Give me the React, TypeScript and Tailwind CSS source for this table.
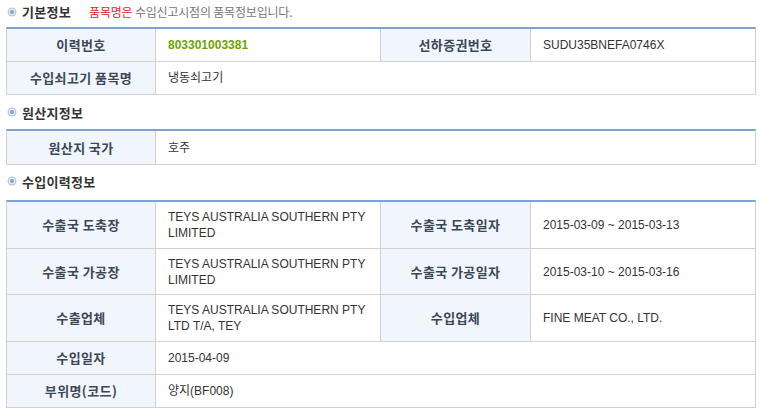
const KR = "font-['Liberation_Sans','Noto_Sans_CJK_KR',sans-serif]";

const Bullet = () => (
  <svg width="10" height="10" viewBox="0 0 10 10" className="mr-[5px] shrink-0">
    <circle cx="5" cy="5" r="4.5" fill="#b9c6d3" />
    <circle cx="5" cy="5" r="3.2" fill="#eef3f9" />
    <circle cx="5" cy="5" r="2.2" fill="#86acd9" />
  </svg>
);

interface SectionTitleProps {
  title: string;
  className?: string;
  children?: React.ReactNode;
}

const SectionTitle = ({ title, className, children }: SectionTitleProps) => (
  <div className={`flex items-center pl-[7px] ${className ?? ""}`}>
    <Bullet />
    <span className="text-[13px] font-bold text-[#333] font-['Noto_Sans_CJK_KR',sans-serif] tracking-[0.3px] leading-none">{title}</span>
    {children}
  </div>
);

const Label = ({ children, w }: { children: React.ReactNode; w: string }) => (
  <div
    className={`${w} shrink-0 flex items-center justify-center bg-[#f1f6fd] border-r border-[#d0d0d0] text-[13px] font-bold text-[#3b4858] font-['Noto_Sans_CJK_KR',sans-serif] tracking-[0.4px]`}
  >
    {children}
  </div>
);

const Value = ({ children, w, last }: { children: React.ReactNode; w: string; last?: boolean }) => (
  <div
    className={`${w} flex items-center pl-[12px] pr-[8px] text-[12px] leading-[16px] text-[#333] ${KR} ${last ? "" : "border-r border-[#d0d0d0]"}`}
  >
    <div>{children}</div>
  </div>
);

interface Cell {
  label: string;
  value: React.ReactNode;
}

const Row = ({ cells, h }: { cells: Cell[]; h: string }) => (
  <div className={`flex ${h} border-b border-[#d0d0d0]`}>
    {cells.length === 2 ? (
      <>
        <Label w="w-[149px]">{cells[0].label}</Label>
        <Value w="w-[225px]">{cells[0].value}</Value>
        <Label w="w-[150px]">{cells[1].label}</Label>
        <Value w="flex-1" last>{cells[1].value}</Value>
      </>
    ) : (
      <>
        <Label w="w-[149px]">{cells[0].label}</Label>
        <Value w="flex-1" last>{cells[0].value}</Value>
      </>
    )}
  </div>
);

const Table = ({ children }: { children: React.ReactNode }) => (
  <div className="ml-[6px] w-[750px] border-x border-[#d0d0d0] border-t-2 border-t-[#7ba3d6]">{children}</div>
);

export default function App() {
  return (
    <div className="w-[760px] h-[412px] bg-white overflow-hidden">
      <SectionTitle title="기본정보" className="h-[27px] pb-[4px]">
        <span className="ml-[18px] text-[12px] tracking-[-0.2px] text-[#777] font-['Noto_Sans_CJK_KR',sans-serif] leading-none">
          <span className="text-[#e8222b]">품목명은</span> 수입신고시점의 품목정보입니다.
        </span>
      </SectionTitle>
      <Table>
        <Row
          h="h-[33px]"
          cells={[
            { label: "이력번호", value: <span className="font-bold text-[#6da400]">803301003381</span> },
            { label: "선하증권번호", value: "SUDU35BNEFA0746X" },
          ]}
        />
        <Row h="h-[33px]" cells={[{ label: "수입쇠고기 품목명", value: "냉동쇠고기" }]} />
      </Table>

      <SectionTitle title="원산지정보" className="h-[34px]" />
      <Table>
        <Row h="h-[34px]" cells={[{ label: "원산지 국가", value: "호주" }]} />
      </Table>

      <SectionTitle title="수입이력정보" className="h-[35px] pb-[3px]" />
      <Table>
        <Row
          h="h-[47px]"
          cells={[
            { label: "수출국 도축장", value: <>TEYS AUSTRALIA SOUTHERN PTY<br />LIMITED</> },
            { label: "수출국 도축일자", value: "2015-03-09 ~ 2015-03-13" },
          ]}
        />
        <Row
          h="h-[46px]"
          cells={[
            { label: "수출국 가공장", value: <>TEYS AUSTRALIA SOUTHERN PTY<br />LIMITED</> },
            { label: "수출국 가공일자", value: "2015-03-10 ~ 2015-03-16" },
          ]}
        />
        <Row
          h="h-[47px]"
          cells={[
            { label: "수출업체", value: <>TEYS AUSTRALIA SOUTHERN PTY<br />LTD T/A, TEY</> },
            { label: "수입업체", value: "FINE MEAT CO., LTD." },
          ]}
        />
        <Row h="h-[33px]" cells={[{ label: "수입일자", value: "2015-04-09" }]} />
        <Row h="h-[33px]" cells={[{ label: "부위명(코드)", value: "양지(BF008)" }]} />
      </Table>
    </div>
  );
}
